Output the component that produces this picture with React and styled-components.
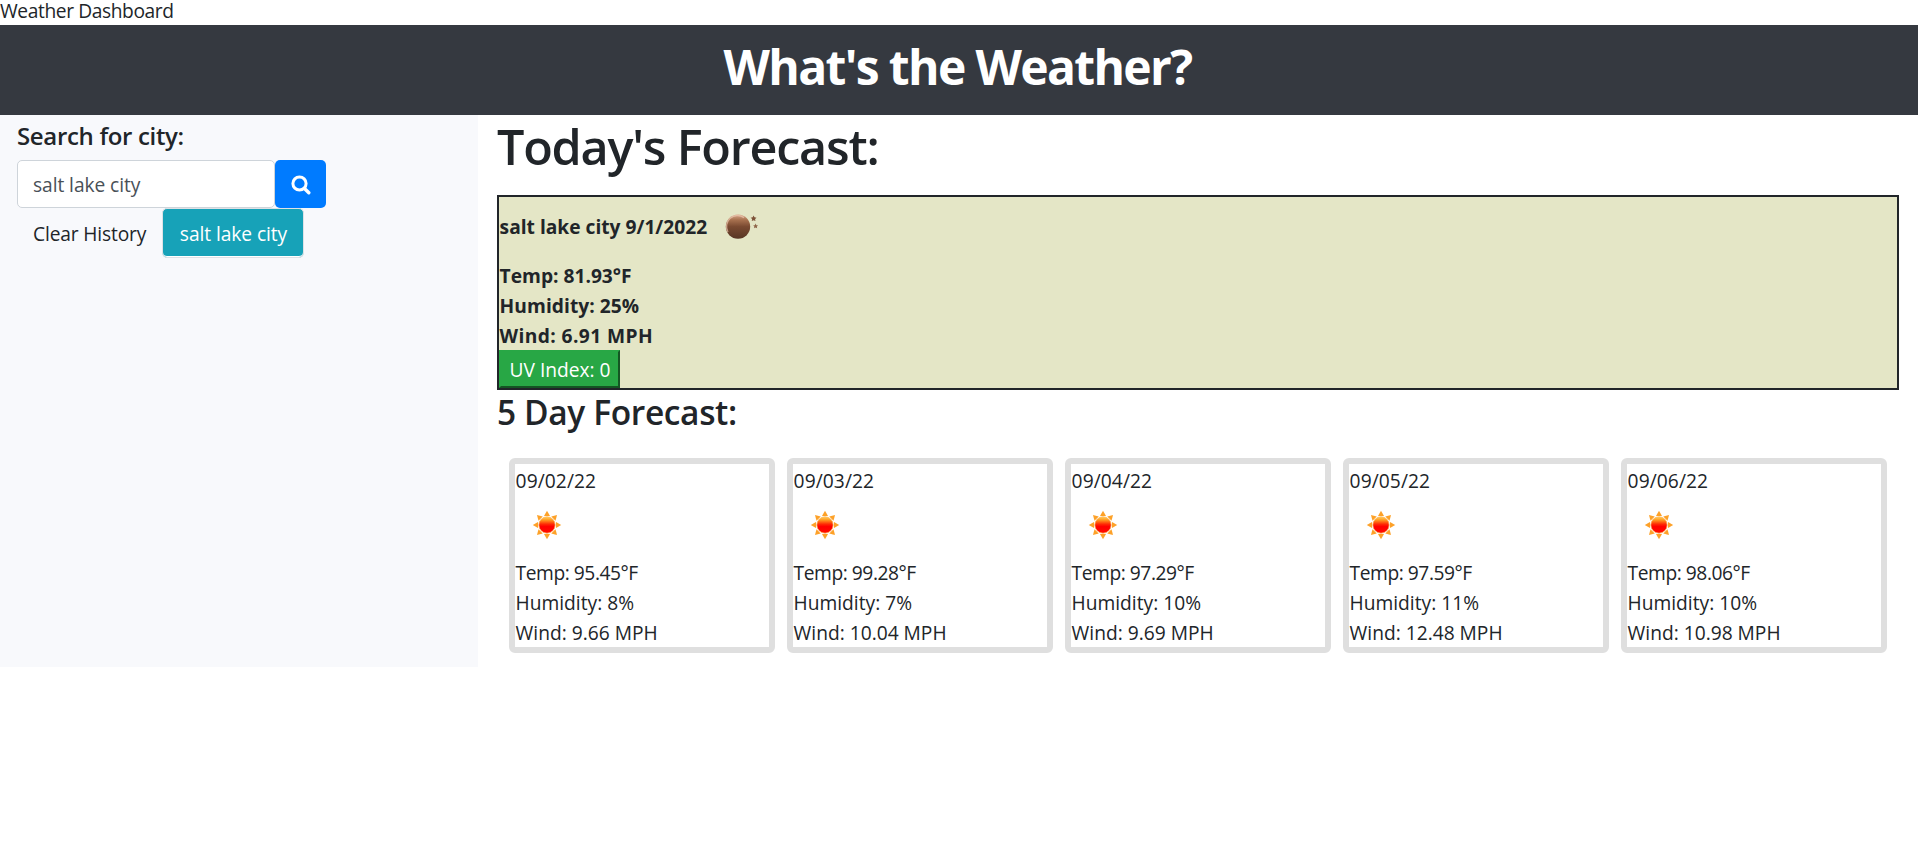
import React from "react";
import styled, { createGlobalStyle } from "styled-components";

const GlobalStyle = createGlobalStyle`
  *, *::before, *::after { box-sizing: border-box; }
  body {
    margin: 0;
    background: #fff;
    color: #212529;
    font: 400 19.2px/30px "Open Sans", "Noto Sans", sans-serif;
  }
  h1, h2, h4, p { margin: 0; white-space: nowrap; }
  input, button { font: inherit; }
`;

const PageLabel = styled.div`
  height: 25px;
  line-height: 21px;
  letter-spacing: -0.4px;
  white-space: nowrap;
`;

const Banner = styled.header`
  height: 90px;
  padding-right: 3px;
  background: #353940;
  text-align: center;
`;

const BannerTitle = styled.h1`
  color: #fff;
  font-size: 48px;
  font-weight: 700;
  line-height: 84px;
  letter-spacing: -1.65px;
`;

const Layout = styled.div`
  display: flex;
  align-items: stretch;
  height: 552px;
`;

const Sidebar = styled.aside`
  width: 478px;
  flex: none;
  padding-left: 17px;
  background: #f8f9fc;
`;

const SearchLabel = styled.h4`
  height: 45px;
  font-size: 24px;
  font-weight: 600;
  line-height: 41px;
  letter-spacing: -0.33px;
`;

const SearchRow = styled.form`
  display: flex;
  height: 48px;
`;

const SearchInput = styled.input`
  width: 258px;
  height: 48px;
  padding: 0 15px;
  border: 1px solid #ced4da;
  border-radius: 5px;
  background: #fff;
  color: #495057;
  letter-spacing: -0.07px;
  outline: none;
`;

const SearchButton = styled.button`
  display: flex;
  align-items: center;
  justify-content: center;
  width: 51px;
  height: 48px;
  padding: 2px 0 0;
  border: 0;
  border-radius: 5px;
  background: #007bff;
  color: #fff;
`;

const HistoryRow = styled.div`
  display: flex;
  height: 50px;
`;

const ClearButton = styled.button`
  width: 145px;
  padding: 1px 0 0 16px;
  border: 0;
  background: transparent;
  color: #212529;
  letter-spacing: -0.15px;
  text-align: left;
  white-space: nowrap;
`;

const CityButton = styled.button`
  width: 142px;
  height: 50px;
  padding: 1px 0 0 1px;
  border: 1px solid #dee2e6;
  border-radius: 5px;
  background: #17a2b8;
  box-shadow: inset 0 -1px 0 #fff;
  color: #fff;
  letter-spacing: -0.07px;
  white-space: nowrap;
`;

const Main = styled.main`
  width: 1402px;
  margin-left: 19px;
`;

const TodayTitle = styled.h1`
  height: 80px;
  font-size: 48.5px;
  font-weight: 600;
  line-height: 62px;
  letter-spacing: -1.2px;
`;

const TodayPanel = styled.section`
  height: 195px;
  padding-top: 15px;
  border: 2px solid #212529;
  background: #e4e6c6;
  font-weight: 700;
`;

const CityLine = styled.div`
  display: flex;
  align-items: center;
  gap: 18px;
  height: 30px;
  margin-bottom: 18px;
`;

const Reading = styled.p`
  height: 30px;
  padding-left: 0.6px;
  line-height: ${(p) => (p.$low ? 32 : 30)}px;
  letter-spacing: ${(p) => p.$track || 0}px;
`;

const UvBadge = styled.button`
  display: block;
  width: 121px;
  height: 38px;
  padding: 2px 0 0 1px;
  border: 2px solid;
  border-color: #28a745 #145523 #145523 #28a745;
  background: #28a745;
  color: #fff;
  font-weight: 400;
  letter-spacing: -0.03px;
`;

const FiveDayTitle = styled.h2`
  height: 68px;
  font-size: 33.5px;
  font-weight: 600;
  line-height: 44px;
  letter-spacing: -0.37px;
`;

const CardRow = styled.div`
  display: flex;
  gap: 12px;
  padding-left: 12px;
`;

const DayCard = styled.article`
  width: 266px;
  height: 195px;
  padding-top: 2px;
  border: 6px solid #dfdfdf;
  border-radius: 6px;
  background: #fff;
`;

const IconSlot = styled.div`
  display: flex;
  align-items: flex-start;
  height: 61px;
  padding: 14px 0 0 17px;
`;

const SearchIcon = () => (
  <svg width="20" height="20" viewBox="0 0 20 20" fill="none" stroke="#fff">
    <circle cx="8.5" cy="8.5" r="6.6" strokeWidth="3" />
    <path d="M13.5 13.5 17.8 17.8" strokeWidth="3.4" strokeLinecap="round" />
  </svg>
);

const star = (cx, cy, r) =>
  Array.from({ length: 10 }, (_, i) => {
    const a = (Math.PI * i) / 5 - Math.PI / 2;
    const d = i % 2 ? r * 0.5 : r;
    return `${cx + d * Math.cos(a)},${cy + d * Math.sin(a)}`;
  }).join(" ");

const MoonIcon = () => (
  <svg width="34" height="26" viewBox="0 0 34 26">
    <defs>
      <linearGradient id="moon" x1="0" y1="0" x2="0" y2="1">
        <stop offset="0" stopColor="#d9a98c" />
        <stop offset="0.22" stopColor="#a97250" />
        <stop offset="0.5" stopColor="#7a4a31" />
        <stop offset="1" stopColor="#573624" />
      </linearGradient>
    </defs>
    <circle cx="13" cy="12.6" r="12.2" fill="url(#moon)" />
    <path d="M3 18A11 11 0 0 1 19 3.6" fill="none" stroke="#ecc9b2" strokeOpacity="0.7" strokeWidth="1.3" />
    <polygon points={star(28.6, 4.6, 3.1)} fill="#7d5238" />
    <polygon points={star(30.6, 12.2, 2.6)} fill="#8d6448" />
  </svg>
);

const SunIcon = () => (
  <svg width="30" height="30" viewBox="-15 -15 30 30">
    <defs>
      <linearGradient id="sun" x1="0" y1="0" x2="0" y2="1">
        <stop offset="0" stopColor="#ffd45c" />
        <stop offset="0.2" stopColor="#ff9a20" />
        <stop offset="0.45" stopColor="#ff2a05" />
        <stop offset="0.6" stopColor="#ff0000" />
        <stop offset="1" stopColor="#ff0d00" />
      </linearGradient>
    </defs>
    {[0, 45, 90, 135, 180, 225, 270, 315].map((a) => (
      <path key={a} d="M-3-9L0-14.2L3-9Z" fill="#fda128" transform={`rotate(${a})`} />
    ))}
    <circle r="8.2" fill="url(#sun)" stroke="#ffb45a" strokeWidth="0.8" />
  </svg>
);

const days = [
  { date: "09/02/22", temp: "95.45", humidity: 8, wind: "9.66" },
  { date: "09/03/22", temp: "99.28", humidity: 7, wind: "10.04" },
  { date: "09/04/22", temp: "97.29", humidity: 10, wind: "9.69" },
  { date: "09/05/22", temp: "97.59", humidity: 11, wind: "12.48" },
  { date: "09/06/22", temp: "98.06", humidity: 10, wind: "10.98" },
];

export default function App() {
  return (
    <>
      <GlobalStyle />
      <PageLabel>Weather Dashboard</PageLabel>
      <Banner>
        <BannerTitle>What's the Weather?</BannerTitle>
      </Banner>
      <Layout>
        <Sidebar>
          <SearchLabel>Search for city:</SearchLabel>
          <SearchRow>
            <SearchInput defaultValue="salt lake city" />
            <SearchButton type="button" aria-label="Search">
              <SearchIcon />
            </SearchButton>
          </SearchRow>
          <HistoryRow>
            <ClearButton>Clear History</ClearButton>
            <CityButton>salt lake city</CityButton>
          </HistoryRow>
        </Sidebar>
        <Main>
          <TodayTitle>Today's Forecast:</TodayTitle>
          <TodayPanel>
            <CityLine>
              <Reading>salt lake city 9/1/2022</Reading>
              <MoonIcon />
            </CityLine>
            <Reading $low>Temp: 81.93°F</Reading>
            <Reading $low $track={0.05}>Humidity: 25%</Reading>
            <Reading $low $track={0.4}>Wind: 6.91 MPH</Reading>
            <UvBadge>UV Index: 0</UvBadge>
          </TodayPanel>
          <FiveDayTitle>5 Day Forecast:</FiveDayTitle>
          <CardRow>
            {days.map((d) => (
              <DayCard key={d.date}>
                <Reading $track={0.08}>{d.date}</Reading>
                <IconSlot>
                  <SunIcon />
                </IconSlot>
                <Reading $low $track={-0.44}>Temp: {d.temp}°F</Reading>
                <Reading $low $track={0}>Humidity: {d.humidity}%</Reading>
                <Reading $low $track={0}>Wind: {d.wind} MPH</Reading>
              </DayCard>
            ))}
          </CardRow>
        </Main>
      </Layout>
    </>
  );
}
